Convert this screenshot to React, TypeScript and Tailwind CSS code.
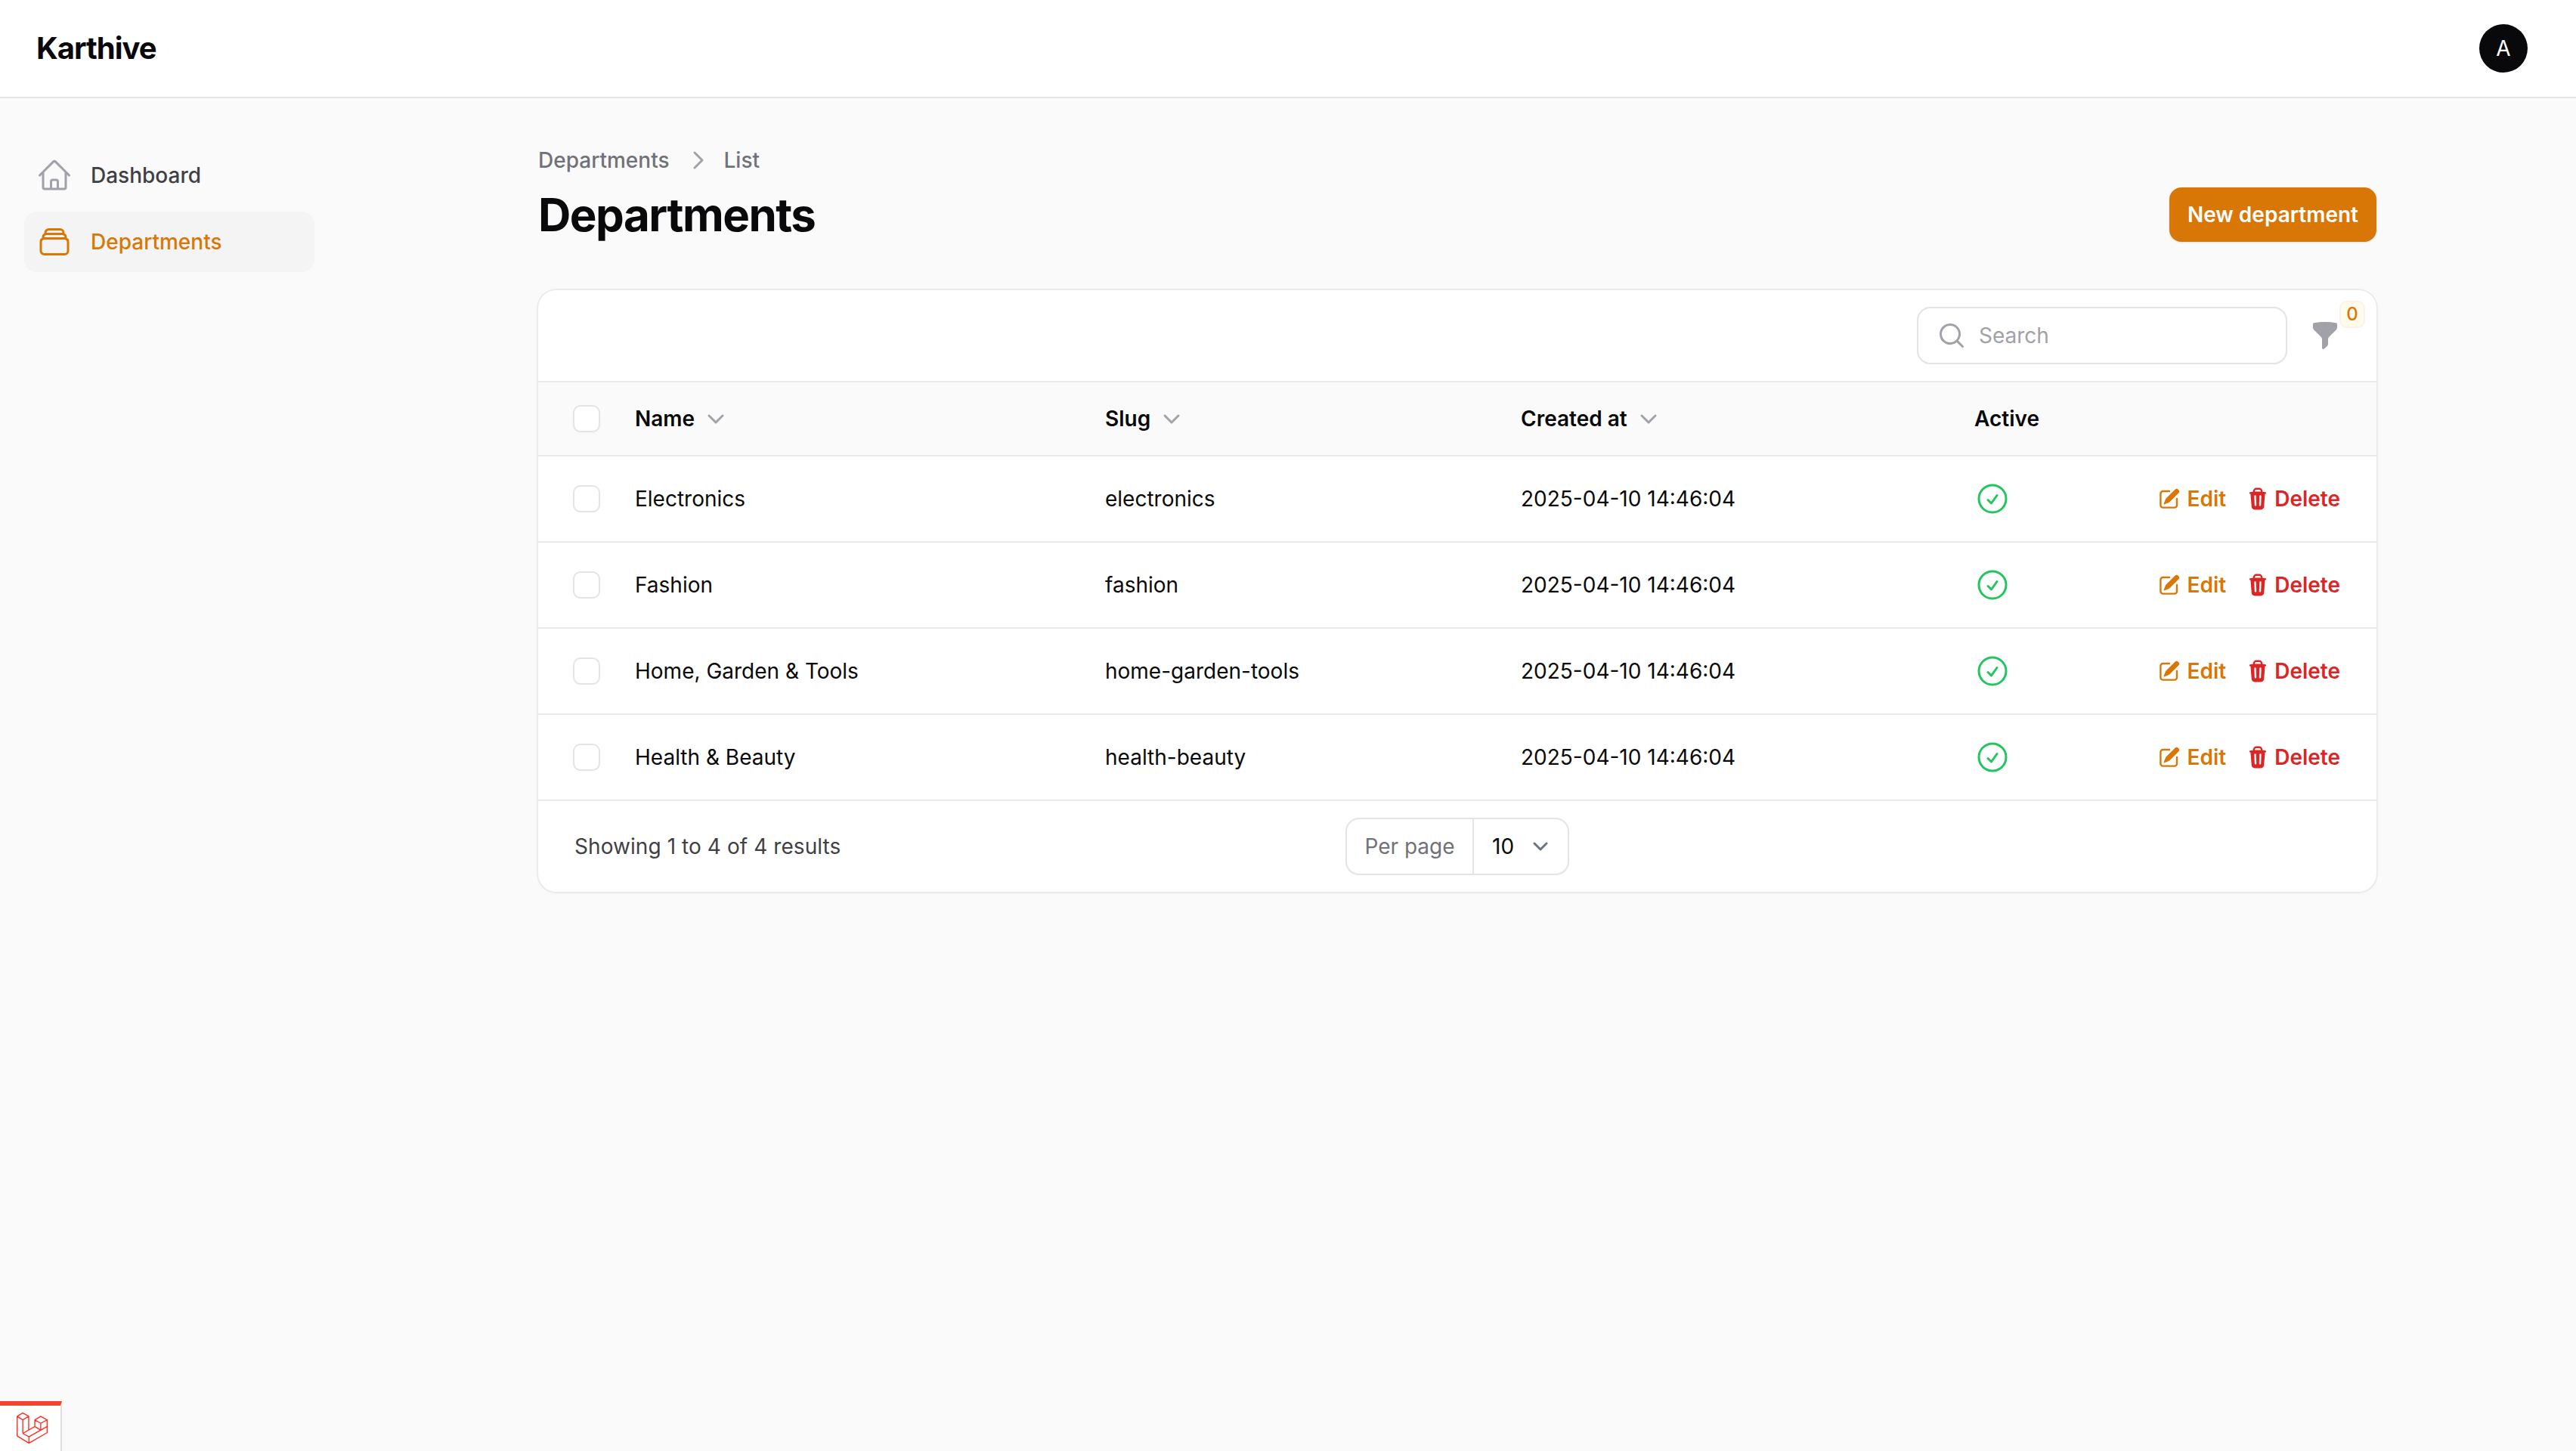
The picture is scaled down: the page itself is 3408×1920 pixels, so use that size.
const departments = [
  { name: 'Electronics', slug: 'electronics' },
  { name: 'Fashion', slug: 'fashion' },
  { name: 'Home, Garden & Tools', slug: 'home-garden-tools' },
  { name: 'Health & Beauty', slug: 'health-beauty' },
];

const rowGrid = 'grid grid-cols-[128px_622px_550px_600px_1fr] items-center';

function Checkbox() {
  return <div className="ml-12 size-8 rounded-lg bg-white ring-2 ring-[#e4e4e7] shadow-sm" />;
}

function SortHeader({ label }: { label: string }) {
  return (
    <div className="flex items-center gap-2">
      <span className="font-semibold text-[#09090b]">{label}</span>
      <svg viewBox="0 0 20 20" fill="none" stroke="currentColor" strokeWidth="1.5" className="size-10 text-[#a1a1aa]">
        <path d="M5.5 8 10 12.5 14.5 8" strokeLinecap="round" strokeLinejoin="round" />
      </svg>
    </div>
  );
}

function Row({ name, slug }: { name: string; slug: string }) {
  return (
    <div className={`${rowGrid} h-[114px] border-b-2 border-[#e9e9ea] text-[#09090b]`}>
      <Checkbox />
      <div>{name}</div>
      <div>{slug}</div>
      <div>2025-04-10 14:46:04</div>
      <div className="flex items-center justify-between pr-12">
        <svg viewBox="0 0 24 24" fill="none" stroke="currentColor" strokeWidth="1.5" className="size-12 text-[#22c55e]">
          <path d="M9 12.75 11.25 15 15 9.75M21 12a9 9 0 1 1-18 0 9 9 0 0 1 18 0Z" strokeLinecap="round" strokeLinejoin="round" />
        </svg>
        <div className="flex items-center gap-[26px] font-semibold">
          <div className="flex items-center gap-2 text-[#d97706]">
            <svg viewBox="0 0 20 20" fill="currentColor" className="size-8">
              <path d="m5.433 13.917 1.262-3.155A4 4 0 0 1 7.58 9.42l6.92-6.918a2.121 2.121 0 0 1 3 3l-6.92 6.918c-.383.383-.84.685-1.343.886l-3.154 1.262a.5.5 0 0 1-.65-.65Z" />
              <path d="M3.5 5.75c0-.69.56-1.25 1.25-1.25H10A.75.75 0 0 0 10 3H4.75A2.75 2.75 0 0 0 2 5.75v9.5A2.75 2.75 0 0 0 4.75 18h9.5A2.75 2.75 0 0 0 17 15.25V10a.75.75 0 0 0-1.5 0v5.25c0 .69-.56 1.25-1.25 1.25h-9.5c-.69 0-1.25-.56-1.25-1.25v-9.5Z" />
            </svg>
            Edit
          </div>
          <div className="flex items-center gap-[6px] text-[#dc2626]">
            <svg viewBox="0 0 20 20" fill="currentColor" className="size-8">
              <path fillRule="evenodd" clipRule="evenodd" d="M8.75 1A2.75 2.75 0 0 0 6 3.75v.443c-.795.077-1.584.176-2.365.298a.75.75 0 1 0 .23 1.482l.149-.022.841 10.518A2.75 2.75 0 0 0 7.596 19h4.807a2.75 2.75 0 0 0 2.742-2.53l.841-10.52.149.023a.75.75 0 0 0 .23-1.482A41.03 41.03 0 0 0 14 4.193V3.75A2.75 2.75 0 0 0 11.25 1h-2.5ZM10 4c.84 0 1.673.025 2.5.075V3.75c0-.69-.56-1.25-1.25-1.25h-2.5c-.69 0-1.25.56-1.25 1.25v.325C8.327 4.025 9.16 4 10 4ZM8.58 7.72a.75.75 0 0 0-1.5.06l.3 7.5a.75.75 0 1 0 1.5-.06l-.3-7.5Zm4.34.06a.75.75 0 1 0-1.5-.06l-.3 7.5a.75.75 0 1 0 1.5.06l.3-7.5Z" />
            </svg>
            Delete
          </div>
        </div>
      </div>
    </div>
  );
}

export default function App() {
  return (
    <div className="relative flex h-[1920px] flex-col overflow-hidden bg-[#fafafa] font-['Inter',sans-serif] text-[28px] leading-10">
      {/* topbar */}
      <header className="z-10 flex h-[128px] shrink-0 items-center justify-between bg-white pl-12 pr-16 shadow-[0_2px_0_#e5e5e6]">
        <div className="text-[40px] leading-[56px] font-bold tracking-tight text-[#09090b]">Karthive</div>
        <div className="flex size-16 items-center justify-center rounded-full bg-[#09090b] text-white">A</div>
      </header>

      <div className="flex flex-1">
        {/* sidebar */}
        <aside className="flex w-[640px] shrink-0 flex-col gap-2 pl-8 pr-[224px] pt-16 font-medium">
          <div className="flex h-20 items-center gap-6 rounded-2xl px-4 text-[#3f3f46]">
            <svg viewBox="0 0 24 24" fill="none" stroke="currentColor" strokeWidth="1.5" className="size-12 text-[#a1a1aa]">
              <path strokeLinecap="round" strokeLinejoin="round" d="m2.25 12 8.954-8.955c.44-.439 1.152-.439 1.591 0L21.75 12M4.5 9.75v10.125c0 .621.504 1.125 1.125 1.125H9.75v-4.875c0-.621.504-1.125 1.125-1.125h2.25c.621 0 1.125.504 1.125 1.125V21h4.125c.621 0 1.125-.504 1.125-1.125V9.75M8.25 21h8.25" />
            </svg>
            Dashboard
          </div>
          <div className="flex h-20 items-center gap-6 rounded-2xl bg-[#f4f4f5] px-4 text-[#d97706]">
            <svg viewBox="0 0 24 24" fill="none" stroke="currentColor" strokeWidth="1.5" className="size-12">
              <path strokeLinecap="round" strokeLinejoin="round" d="M6 6.878V6a2.25 2.25 0 0 1 2.25-2.25h7.5A2.25 2.25 0 0 1 18 6v.878m-12 0c.235-.083.487-.128.75-.128h10.5c.263 0 .515.045.75.128m-12 0A2.25 2.25 0 0 0 4.5 9v.878m13.5-3A2.25 2.25 0 0 1 19.5 9v.878m0 0a2.246 2.246 0 0 0-.75-.128H5.25c-.263 0-.515.045-.75.128m15 0A2.25 2.25 0 0 1 21 12v6a2.25 2.25 0 0 1-2.25 2.25H5.25A2.25 2.25 0 0 1 3 18v-6c0-.98.626-1.813 1.5-2.122" />
            </svg>
            Departments
          </div>
        </aside>

        {/* main */}
        <main className="ml-[72px] w-[2432px] pt-16">
          <div className="flex items-center font-medium text-[#71717a]">
            <span>Departments</span>
            <svg viewBox="0 0 20 20" fill="none" stroke="currentColor" strokeWidth="1.5" className="ml-[18px] mr-[14px] size-10 text-[#a1a1aa]">
              <path d="M7.5 5 12.5 10 7.5 15" strokeLinecap="round" strokeLinejoin="round" />
            </svg>
            <span>List</span>
          </div>
          <div className="mt-4 flex items-center justify-between">
            <h1 className="text-[60px] leading-[72px] font-bold tracking-tight text-[#09090b]">Departments</h1>
            <button className="h-[72px] rounded-2xl bg-[#d97706] px-6 font-semibold text-white shadow-sm">New department</button>
          </div>

          {/* table card */}
          <div className="mt-16 overflow-hidden rounded-3xl bg-white shadow-sm ring-2 ring-[#ebebec]">
            <div className="flex h-[122px] items-start justify-end gap-8 border-b-2 border-[#e9e9ea] pr-12 pt-6">
              <div className="flex h-[72px] w-[486px] items-center rounded-2xl bg-white pl-[24px] text-[#a1a1aa] shadow-sm ring-2 ring-[#e4e4e7]">
                <svg viewBox="0 0 20 20" fill="currentColor" className="size-10">
                  <path fillRule="evenodd" clipRule="evenodd" d="M9 3.5a5.5 5.5 0 1 0 0 11 5.5 5.5 0 0 0 0-11ZM2 9a7 7 0 1 1 12.452 4.391l3.328 3.329a.75.75 0 1 1-1.06 1.06l-3.329-3.328A7 7 0 0 1 2 9Z" />
                </svg>
                <span className="ml-4">Search</span>
              </div>
              <div className="relative mt-4 size-10 text-[#a1a1aa]">
                <svg viewBox="0 0 20 20" fill="currentColor" className="size-10">
                  <path d="M2.628 1.601C5.028 1.206 7.49 1 10 1s4.973.206 7.372.601a.75.75 0 0 1 .628.74v2.288a2.25 2.25 0 0 1-.659 1.59l-4.682 4.683a2.25 2.25 0 0 0-.659 1.59v3.037c0 .684-.31 1.33-.844 1.757l-1.937 1.55A.75.75 0 0 1 8 18.25v-5.757a2.25 2.25 0 0 0-.659-1.591L2.659 6.22A2.25 2.25 0 0 1 2 4.629V2.34a.75.75 0 0 1 .628-.74Z" />
                </svg>
                <span className="absolute -top-6 left-[41px] flex h-8 w-[30px] items-center justify-center rounded-lg bg-[#fffbeb] text-2xl font-medium text-[#d97706] ring-2 ring-[#d97706]/10">0</span>
              </div>
            </div>

            <div className={`${rowGrid} h-[98px] border-b-2 border-[#e9e9ea] bg-[#fafafa]`}>
              <Checkbox />
              <SortHeader label="Name" />
              <SortHeader label="Slug" />
              <SortHeader label="Created at" />
              <div className="font-semibold text-[#09090b]">Active</div>
            </div>

            {departments.map((d) => (
              <Row key={d.slug} name={d.name} slug={d.slug} />
            ))}

            <div className="grid h-[120px] grid-cols-[1fr_auto_1fr] items-center px-12">
              <div className="tracking-[0.07px] text-[#3f3f46]">Showing 1 to 4 of 4 results</div>
              <div className="flex h-[72px] w-[292px] items-center rounded-2xl bg-white shadow-sm ring-2 ring-[#e4e4e7]">
                <div className="flex h-full w-[168px] items-center justify-center border-r-2 border-[#e4e4e7] text-[#71717a]">Per page</div>
                <div className="flex flex-1 items-center justify-between pl-6 pr-6 text-[#09090b]">
                  10
                  <svg viewBox="0 0 20 20" fill="none" stroke="#6b7280" strokeWidth="1.5" className="size-10 -mr-2">
                    <path d="M6 8l4 4 4-4" strokeLinecap="round" strokeLinejoin="round" />
                  </svg>
                </div>
              </div>
              <div />
            </div>
          </div>
        </main>
      </div>

      {/* debugbar tab */}
      <div className="absolute bottom-0 left-0 flex h-[66px] w-[82px] items-start border-t-[6px] border-r-2 border-t-[#f4432f] border-r-[#dedede] bg-white pl-[20px] pt-2">
        <svg viewBox="60 145 130 127" fill="none" stroke="#ff2d20" strokeWidth="4" strokeLinejoin="round" className="h-[43px] w-[44px]">
          <path d="M68 163 90 150 113 163 90 177ZM90 177V230M113 163V217M68 163V240L114 268 185 227V177M137 177 160 163 185 177 160 190ZM137 177V203L160 217 185 203M160 190V217M90 230 137 203M90 230 114 243 160 217M114 243V268" />
        </svg>
      </div>
    </div>
  );
}
